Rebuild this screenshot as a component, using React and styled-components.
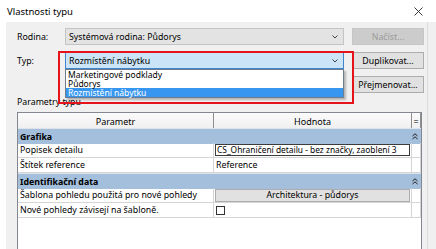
import React from "react";
import styled, { createGlobalStyle } from "styled-components";

const GlobalStyle = createGlobalStyle`
  html, body {
    margin: 0;
    padding: 0;
    background: #fff;
  }
  body {
    font-family: "Noto Sans", "Segoe UI", sans-serif;
    font-size: 8.8px;
    color: #000;
  }
`;

const Window = styled.div`
  width: 436px;
  height: 249px;
  display: flex;
  flex-direction: column;
  overflow: hidden;
  background: #fff;
`;

const TitleBar = styled.div`
  height: 22px;
  flex: none;
  display: flex;
  align-items: center;
  justify-content: space-between;
  padding: 0 13px 0 7px;
  font-size: 9.5px;
`;

const Body = styled.div`
  flex: 1;
  min-height: 0;
  margin-left: 6px;
  background: #f0f0f0;
  display: flex;
`;

const Panel = styled.div`
  width: 408px;
  padding: 6px 2px 0 11px;
  border-right: 1px solid #dcdcdc;
  display: flex;
  flex-direction: column;
`;

const FormGrid = styled.div`
  display: grid;
  grid-template-columns: 40px 279px 72px;
  grid-auto-rows: 17px;
  column-gap: 8px;
  row-gap: 7px;
  align-items: center;
`;

const Label = styled.div`
  white-space: nowrap;
`;

const ComboWrap = styled.div`
  position: relative;
  height: 100%;
`;

const Combo = styled.div`
  height: 100%;
  box-sizing: border-box;
  display: flex;
  align-items: center;
  justify-content: space-between;
  padding: 0 5px 0 3px;
  border: 1px solid ${(p) => (p.$focused ? "#3f86cf" : "#c4c4c4")};
  background: ${(p) => (p.$focused ? "#cce4f7" : "#e3e3e3")};
  white-space: nowrap;
`;

const Button = styled.div`
  height: 100%;
  box-sizing: border-box;
  display: flex;
  align-items: center;
  justify-content: center;
  border: 1px solid ${(p) => (p.$disabled ? "#c6c6c6" : "#adadad")};
  background: ${(p) => (p.$disabled ? "#cccccc" : "#e1e1e1")};
  color: ${(p) => (p.$disabled ? "#9b9b9b" : "#000")};
  white-space: nowrap;
`;

const DropList = styled.div`
  position: absolute;
  top: 100%;
  left: 0;
  right: 0;
  z-index: 2;
  background: #fff;
  border: 1px solid #6e7c8c;
  box-shadow: 2px 2px 2px rgba(0, 0, 0, 0.25);
`;

const DropItem = styled.div`
  height: 9px;
  line-height: 9px;
  font-size: 8.5px;
  padding-left: 2px;
  white-space: nowrap;
  background: ${(p) => (p.$selected ? "#3797f0" : "transparent")};
  color: ${(p) => (p.$selected ? "#fff" : "#000")};
`;

const Highlight = styled.div`
  position: absolute;
  left: -7px;
  top: -1px;
  width: 296px;
  height: 53px;
  box-sizing: border-box;
  border: 2px solid #e5141b;
  z-index: 3;
  pointer-events: none;
`;

const SectionLabel = styled.div`
  margin-top: 4px;
  height: 10px;
  line-height: 10px;
`;

const Table = styled.div`
  margin-top: 5px;
  flex: 1;
  width: 405px;
  box-sizing: border-box;
  border: 1px solid #828790;
  border-bottom: none;
  background: #fff;
  display: grid;
  grid-template-columns: 196px 198px 1fr;
  grid-auto-rows: 15px;
  align-content: start;
`;

const HeadCell = styled.div`
  height: 17px;
  box-sizing: border-box;
  display: flex;
  align-items: center;
  justify-content: center;
  background: linear-gradient(#fbfbfb, #efefef);
  border-right: 1px solid #8e8e8e;
  border-bottom: 1px solid #b9b9b9;
  font-size: 9px;
  &:last-child {
    border-right: none;
  }
`;

const GroupRow = styled.div`
  grid-column: 1 / -1;
  height: 16px;
  box-sizing: border-box;
  border-top: 1px solid #dde3ea;
  background: #a3bfdc;
  display: flex;
  align-items: center;
  justify-content: space-between;
  padding: 0 3px 0 2px;
  font-weight: 700;
`;

const Cell = styled.div`
  box-sizing: border-box;
  border-right: 1px solid #d5d5d5;
  border-bottom: 1px solid #d5d5d5;
  display: flex;
  align-items: center;
  padding: ${(p) => (p.$tight ? "1px" : "0 2px")};
  white-space: nowrap;
  overflow: hidden;
`;

const ValueBox = styled.div`
  flex: 1;
  height: 12px;
  box-sizing: border-box;
  border: 1px solid #3c3c3c;
  padding-left: 1px;
  line-height: 10px;
  font-size: 8.4px;
  overflow: hidden;
`;

const ValueButton = styled.div`
  flex: 1;
  height: 13px;
  box-sizing: border-box;
  border: 1px solid #adadad;
  background: #e1e1e1;
  display: flex;
  align-items: center;
  justify-content: center;
`;

const CheckBox = styled.div`
  width: 9px;
  height: 9px;
  box-sizing: border-box;
  border: 1px solid #333;
  background: #fff;
`;

const Chevron = () => (
  <svg width="6" height="4" viewBox="0 0 6 4">
    <path d="M0.5 0.5 L3 3 L5.5 0.5" fill="none" stroke="#444" strokeWidth="1" />
  </svg>
);

const Collapse = () => (
  <svg width="6" height="7" viewBox="0 0 6 7">
    <path d="M0.5 3 L3 0.8 L5.5 3 M0.5 6 L3 3.8 L5.5 6" fill="none" stroke="#222" strokeWidth="1" />
  </svg>
);

const Close = () => (
  <svg width="9" height="9" viewBox="0 0 9 9">
    <path d="M0.5 0.5 L8.5 8.5 M8.5 0.5 L0.5 8.5" stroke="#222" strokeWidth="0.9" />
  </svg>
);

const types = ["Marketingové podklady", "Půdorys", "Rozmístění nábytku"];

export default function App() {
  return (
    <Window>
      <GlobalStyle />
      <TitleBar>
        <span>Vlastnosti typu</span>
        <Close />
      </TitleBar>
      <Body>
        <Panel>
          <FormGrid>
            <Label>Rodina:</Label>
            <Combo>
              <span>Systémová rodina: Půdorys</span>
              <Chevron />
            </Combo>
            <Button $disabled>Načíst...</Button>

            <Label>Typ:</Label>
            <ComboWrap>
              <Combo $focused>
                <span>Rozmístění nábytku</span>
                <Chevron />
              </Combo>
              <DropList>
                {types.map((t) => (
                  <DropItem key={t} $selected={t === "Rozmístění nábytku"}>
                    {t}
                  </DropItem>
                ))}
              </DropList>
              <Highlight />
            </ComboWrap>
            <Button>Duplikovat...</Button>

            <span />
            <span />
            <Button>Přejmenovat...</Button>
          </FormGrid>

          <SectionLabel>Parametry typu</SectionLabel>

          <Table>
            <HeadCell>Parametr</HeadCell>
            <HeadCell>Hodnota</HeadCell>
            <HeadCell>=</HeadCell>

            <GroupRow>
              <span>Grafika</span>
              <Collapse />
            </GroupRow>
            <Cell>Popisek detailu</Cell>
            <Cell $tight>
              <ValueBox>CS_Ohraničení detailu - bez značky, zaoblení 3</ValueBox>
            </Cell>
            <Cell />
            <Cell>Štítek reference</Cell>
            <Cell>Reference</Cell>
            <Cell />

            <GroupRow>
              <span>Identifikační data</span>
              <Collapse />
            </GroupRow>
            <Cell>Šablona pohledu použitá pro nové pohledy</Cell>
            <Cell $tight>
              <ValueButton>Architektura - půdorys</ValueButton>
            </Cell>
            <Cell />
            <Cell>Nové pohledy závisejí na šabloně.</Cell>
            <Cell>
              <CheckBox />
            </Cell>
            <Cell />
          </Table>
        </Panel>
      </Body>
    </Window>
  );
}
